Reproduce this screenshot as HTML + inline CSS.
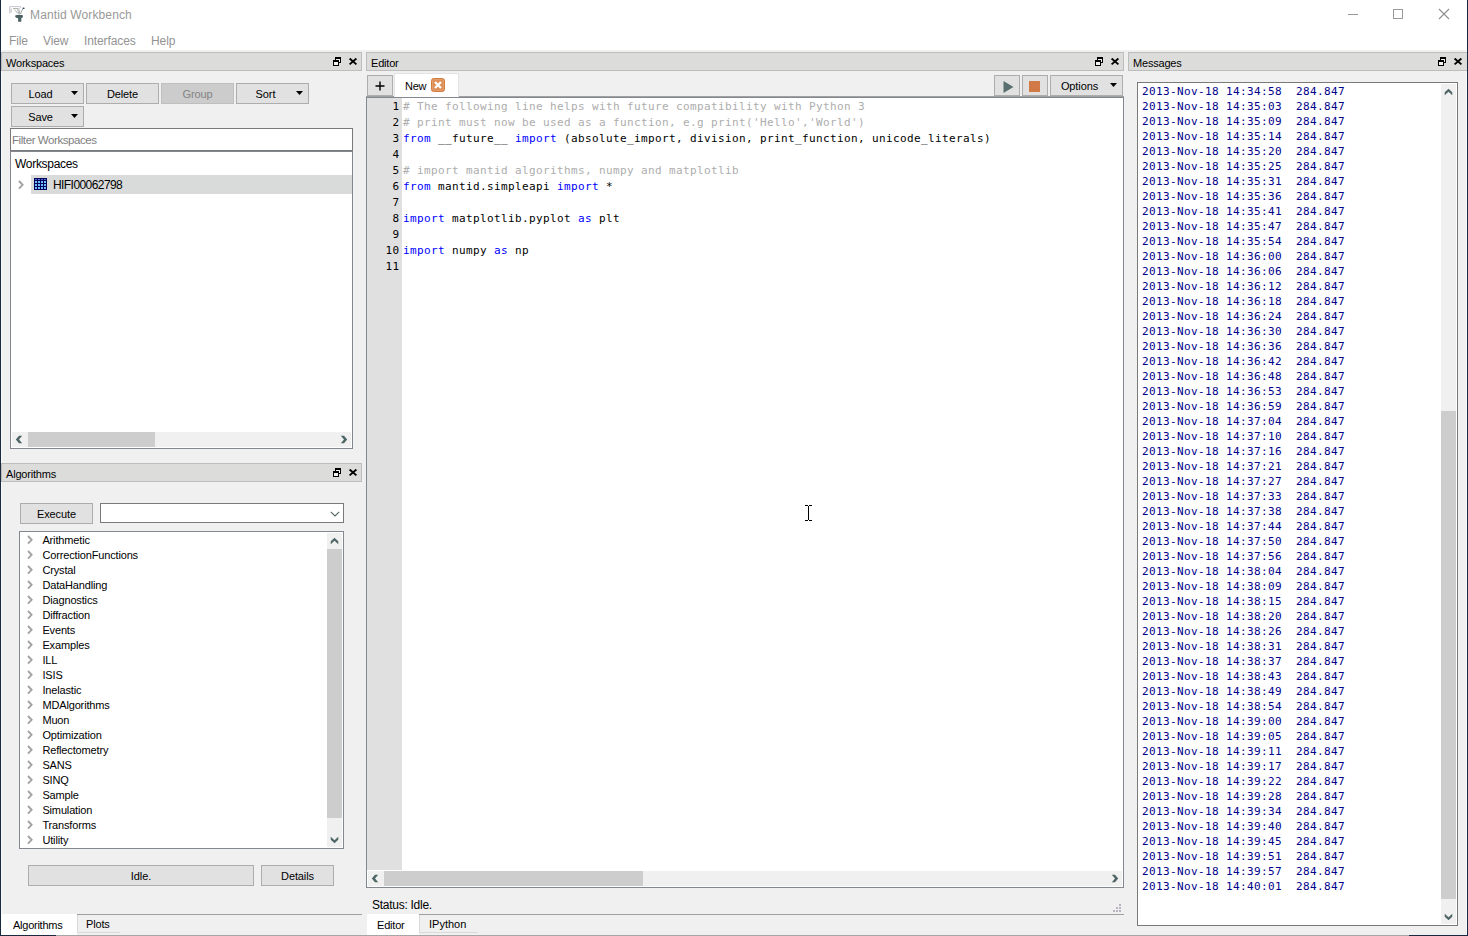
<!DOCTYPE html>
<html lang="en"><head><meta charset="utf-8"><title>Mantid Workbench</title>
<style>
html,body{margin:0;padding:0}
body{width:1468px;height:936px;overflow:hidden;background:#f0f0f0;position:relative;
 font-family:"Liberation Sans",sans-serif;font-size:11px;color:#000}
div,span,svg{position:absolute;box-sizing:border-box}
.t{white-space:pre;line-height:1}
/* window chrome */
#wl{left:0;top:0;width:1px;height:936px;background:#1a2940}
#wr{left:1467px;top:0;width:1px;height:936px;background:#1a2940}
#wb1{left:0;top:935px;width:56px;height:1px;background:#1a2940}
#wb2{left:56px;top:935px;width:1353px;height:1px;background:#a6a6a6}
#wb3{left:1409px;top:935px;width:59px;height:1px;background:#1a2940}
#top{left:1px;top:0;width:1466px;height:50px;background:#fff}
#title{left:30px;top:9px;font-size:12px;color:#999;letter-spacing:0.13px}
.menu{top:35px;font-size:12px;color:#939393;letter-spacing:-0.1px}
/* dock title bars */
.dt{height:19px;background:#dcdcda;border:1px solid #bdbdbd}
.dt .t{left:4px;top:5px;letter-spacing:-0.2px}
/* buttons */
.btn{background:#e1e1e1;border:1px solid #adadad;text-align:center;letter-spacing:-0.1px}
.btn .t{position:static;display:block;line-height:19px;padding-top:1px}
.btn.dis{background:#cccccc;border-color:#bfbfbf;color:#838383}
.btn .dd{right:5px;top:7px;width:7px;height:4px}
/* frames */
.fr{background:#fff;border:1px solid #828790}
.sb{background:#f0f0f0}
.th{background:#cdcdcd}
/* algorithm tree */
.ar{position:relative;height:15px;left:0;width:306px}
.ar span{left:22.4px;top:2px;white-space:pre;line-height:1;letter-spacing:-0.15px}
.ar .tw{left:6.8px;top:2.3px;width:7px;height:10px}
/* editor */
#code{left:403px;top:99px;font-family:"DejaVu Sans Mono","Liberation Mono",monospace;font-size:11px;letter-spacing:0.378px}
#code div{position:relative;height:16px;line-height:16px;white-space:pre}
.c{color:#adadad}.k{color:#0000ff}
#nums{left:368px;top:99px;width:31.4px;font-family:"DejaVu Sans Mono","Liberation Mono",monospace;font-size:11px;letter-spacing:0.378px;text-align:right}
#nums div{position:relative;height:16px;line-height:16px}
/* messages */
#msgs{left:1142px;top:84px;font-family:"DejaVu Sans Mono","Liberation Mono",monospace;font-size:11px;letter-spacing:0.378px;color:#00008b}
.ml{position:relative;height:15px;line-height:15px;white-space:pre}
/* tabs */
.tab{background:#fff}

</style></head>
<body>
<!-- ===== window chrome ===== -->
<div id="top"></div>
<div style="left:1px;top:50px;width:1px;height:885px;background:#fafafa"></div><div style="left:1466px;top:50px;width:1px;height:885px;background:#fafafa"></div>
<svg id="logo" style="left:0;top:0;width:30px;height:26px" viewBox="0 0 30 26">
 <path d="M9.6 13.5 V6.6 H20.6 V8.2" stroke="#cbc7d0" stroke-width="1" fill="none"/>
 <path d="M13 8.5 H17" stroke="#b4b4aa" stroke-width="1" fill="none"/>
 <path d="M11.2 8.5 L11 12.8 M14.5 9.5 L18 13.5 M17.3 8 L19 14.5 M18.8 8 L19.8 14.5" stroke="#a9adad" stroke-width="0.9" fill="none"/>
 <path d="M23 8.8 Q21.3 10.5 20.6 14" stroke="#8c9a8c" stroke-width="0.9" fill="none"/>
 <ellipse cx="23.6" cy="8.3" rx="1.1" ry="0.8" fill="#2c3c52"/>
 <path d="M15 16.3 Q15.3 15 17 15 H21.8 Q23 15 23 16.2 Q22.6 18.2 21.3 18.2 V21.7 H18.1 V18.2 Q15.6 18.2 15 16.3Z" fill="#4c6262"/>
</svg>
<span class="t" id="title">Mantid Workbench</span>
<span class="t menu" style="left:9px">File</span>
<span class="t menu" style="left:43px">View</span>
<span class="t menu" style="left:84px">Interfaces</span>
<span class="t menu" style="left:151px">Help</span>
<svg style="left:1342px;top:4px;width:112px;height:22px" viewBox="0 0 112 22">
 <path d="M6 10.5 H16" stroke="#999" stroke-width="1" fill="none"/>
 <rect x="51.5" y="5.5" width="9" height="9" stroke="#999" stroke-width="1" fill="none"/>
 <path d="M97 5 L107 15 M107 5 L97 15" stroke="#8f8f8f" stroke-width="1.1" fill="none"/>
</svg>

<!-- ===== dock title bars ===== -->
<div class="dt" style="left:1px;top:52px;width:361px"><span class="t">Workspaces</span>
 <svg class="fl" style="left:331px;top:4px;width:8px;height:9px" viewBox="0 0 8 9" shape-rendering="crispEdges"><path d="M3 2H7V5H6V8H1V5H3Z" fill="#f2f2f2"/><path d="M2 0H8V6H6V5H7V2H3V3H2Z M0 3H6V9H0Z M1 5V8H5V5Z" fill="#000" fill-rule="evenodd"/></svg>
 <svg class="cl" style="left:346px;top:5px;width:10px;height:8px" viewBox="0 0 10 8"><path d="M1.6 0.5 L8.4 6.4 M8.4 0.5 L1.6 6.4" stroke="#000" stroke-width="1.9" fill="none"/></svg>
</div>
<div class="dt" style="left:366px;top:52px;width:758px"><span class="t">Editor</span>
 <svg class="fl" style="left:728px;top:4px;width:8px;height:9px" viewBox="0 0 8 9" shape-rendering="crispEdges"><path d="M3 2H7V5H6V8H1V5H3Z" fill="#f2f2f2"/><path d="M2 0H8V6H6V5H7V2H3V3H2Z M0 3H6V9H0Z M1 5V8H5V5Z" fill="#000" fill-rule="evenodd"/></svg>
 <svg class="cl" style="left:743px;top:5px;width:10px;height:8px" viewBox="0 0 10 8"><path d="M1.6 0.5 L8.4 6.4 M8.4 0.5 L1.6 6.4" stroke="#000" stroke-width="1.9" fill="none"/></svg>
</div>
<div class="dt" style="left:1128px;top:52px;width:340px"><span class="t">Messages</span>
 <svg class="fl" style="left:309px;top:4px;width:8px;height:9px" viewBox="0 0 8 9" shape-rendering="crispEdges"><path d="M3 2H7V5H6V8H1V5H3Z" fill="#f2f2f2"/><path d="M2 0H8V6H6V5H7V2H3V3H2Z M0 3H6V9H0Z M1 5V8H5V5Z" fill="#000" fill-rule="evenodd"/></svg>
 <svg class="cl" style="left:324px;top:5px;width:10px;height:8px" viewBox="0 0 10 8"><path d="M1.6 0.5 L8.4 6.4 M8.4 0.5 L1.6 6.4" stroke="#000" stroke-width="1.9" fill="none"/></svg>
</div>
<div class="dt" style="left:1px;top:463px;width:361px"><span class="t">Algorithms</span>
 <svg class="fl" style="left:331px;top:4px;width:8px;height:9px" viewBox="0 0 8 9" shape-rendering="crispEdges"><path d="M3 2H7V5H6V8H1V5H3Z" fill="#f2f2f2"/><path d="M2 0H8V6H6V5H7V2H3V3H2Z M0 3H6V9H0Z M1 5V8H5V5Z" fill="#000" fill-rule="evenodd"/></svg>
 <svg class="cl" style="left:346px;top:5px;width:10px;height:8px" viewBox="0 0 10 8"><path d="M1.6 0.5 L8.4 6.4 M8.4 0.5 L1.6 6.4" stroke="#000" stroke-width="1.9" fill="none"/></svg>
</div>

<!-- ===== Workspaces panel ===== -->
<div class="btn" style="left:11px;top:83px;width:73px;height:21px"><span class="t" style="padding-right:14px">Load</span><svg class="dd" viewBox="0 0 7 4"><path d="M0 0 H7 L3.5 4 Z" fill="#000"/></svg></div>
<div class="btn" style="left:86px;top:83px;width:73px;height:21px"><span class="t">Delete</span></div>
<div class="btn dis" style="left:161px;top:83px;width:73px;height:21px"><span class="t">Group</span></div>
<div class="btn" style="left:236px;top:83px;width:73px;height:21px"><span class="t" style="padding-right:14px">Sort</span><svg class="dd" viewBox="0 0 7 4"><path d="M0 0 H7 L3.5 4 Z" fill="#000"/></svg></div>
<div class="btn" style="left:11px;top:106px;width:73px;height:21px"><span class="t" style="padding-right:14px">Save</span><svg class="dd" viewBox="0 0 7 4"><path d="M0 0 H7 L3.5 4 Z" fill="#000"/></svg></div>
<div class="fr" style="left:10px;top:128px;width:343px;height:23px;border-color:#7a7a7a"><span class="t" style="left:1px;top:6px;font-size:11.5px;letter-spacing:-0.42px;color:#808080">Filter Workspaces</span></div>
<div class="fr" style="left:10px;top:151px;width:343px;height:298px">
 <span class="t" style="left:4px;top:6px;font-size:12px;letter-spacing:-0.3px">Workspaces</span>
 <div style="left:20px;top:23px;width:321px;height:19px;background:#d9dbda"></div>
 <svg style="left:6.5px;top:27.8px;width:7px;height:10px" viewBox="0 0 7 10"><path d="M1 1 L4.6 4.8 L1 8.6" fill="none" stroke="#a3a3a3" stroke-width="1.9"/></svg>
 <svg id="wsicon" style="left:23px;top:26px;width:13px;height:12px" viewBox="0 0 13 12" shape-rendering="crispEdges">
  <rect width="13" height="12" fill="#00005c"/>
  <g fill="#4a6fd0"><rect x="1" y="1" width="2" height="1"/><rect x="4" y="1" width="2" height="1"/><rect x="7" y="1" width="2" height="1"/><rect x="10" y="1" width="2" height="1"/></g>
  <g fill="#6cc0ff"><rect x="1" y="3" width="2" height="2"/><rect x="4" y="3" width="2" height="2"/><rect x="7" y="3" width="2" height="2"/><rect x="10" y="3" width="2" height="2"/><rect x="1" y="6" width="2" height="2"/><rect x="4" y="6" width="2" height="2"/><rect x="7" y="6" width="2" height="2"/><rect x="10" y="6" width="2" height="2"/><rect x="1" y="9" width="2" height="2"/><rect x="4" y="9" width="2" height="2"/><rect x="7" y="9" width="2" height="2"/><rect x="10" y="9" width="2" height="2"/></g>
 </svg>
 <span class="t" style="left:42px;top:27px;font-size:12px;letter-spacing:-0.57px">HIFI00062798</span>
 </div>
<div class="sb" style="left:12px;top:432px;width:339px;height:15px"></div>
<div class="th" style="left:28px;top:432px;width:127px;height:15px"></div>
<svg style="left:15px;top:435px;width:8px;height:9px" viewBox="0 0 8 9"><polygon points="0.8,4.5 4,0.85 7.2,0.85 4,4.5 7.2,8.15 4,8.15" fill="#4e6565"/></svg>
<svg style="left:340px;top:435px;width:8px;height:9px" viewBox="0 0 8 9"><polygon points="7.2,4.5 4,0.85 0.8,0.85 4,4.5 0.8,8.15 4,8.15" fill="#4e6565"/></svg>

<!-- ===== Algorithms panel ===== -->
<div class="btn" style="left:20px;top:503px;width:73px;height:21px"><span class="t">Execute</span></div>
<div class="fr" style="left:100px;top:503px;width:244px;height:20px;border-color:#7a7a7a">
 <svg style="left:229px;top:7px;width:10px;height:6px" viewBox="0 0 10 6"><path d="M0.8 0.8 L5 5 L9.2 0.8" fill="none" stroke="#566464" stroke-width="1.1"/></svg>
</div>
<div class="fr" style="left:19px;top:531px;width:325px;height:318px">
 <div style="left:0;top:1px;width:306px;height:315px">
<div class="ar"><svg class="tw" viewBox="0 0 7 10"><path d="M1 1 L4.6 4.8 L1 8.6" fill="none" stroke="#a3a3a3" stroke-width="1.9"/></svg><span>Arithmetic</span></div>
<div class="ar"><svg class="tw" viewBox="0 0 7 10"><path d="M1 1 L4.6 4.8 L1 8.6" fill="none" stroke="#a3a3a3" stroke-width="1.9"/></svg><span>CorrectionFunctions</span></div>
<div class="ar"><svg class="tw" viewBox="0 0 7 10"><path d="M1 1 L4.6 4.8 L1 8.6" fill="none" stroke="#a3a3a3" stroke-width="1.9"/></svg><span>Crystal</span></div>
<div class="ar"><svg class="tw" viewBox="0 0 7 10"><path d="M1 1 L4.6 4.8 L1 8.6" fill="none" stroke="#a3a3a3" stroke-width="1.9"/></svg><span>DataHandling</span></div>
<div class="ar"><svg class="tw" viewBox="0 0 7 10"><path d="M1 1 L4.6 4.8 L1 8.6" fill="none" stroke="#a3a3a3" stroke-width="1.9"/></svg><span>Diagnostics</span></div>
<div class="ar"><svg class="tw" viewBox="0 0 7 10"><path d="M1 1 L4.6 4.8 L1 8.6" fill="none" stroke="#a3a3a3" stroke-width="1.9"/></svg><span>Diffraction</span></div>
<div class="ar"><svg class="tw" viewBox="0 0 7 10"><path d="M1 1 L4.6 4.8 L1 8.6" fill="none" stroke="#a3a3a3" stroke-width="1.9"/></svg><span>Events</span></div>
<div class="ar"><svg class="tw" viewBox="0 0 7 10"><path d="M1 1 L4.6 4.8 L1 8.6" fill="none" stroke="#a3a3a3" stroke-width="1.9"/></svg><span>Examples</span></div>
<div class="ar"><svg class="tw" viewBox="0 0 7 10"><path d="M1 1 L4.6 4.8 L1 8.6" fill="none" stroke="#a3a3a3" stroke-width="1.9"/></svg><span>ILL</span></div>
<div class="ar"><svg class="tw" viewBox="0 0 7 10"><path d="M1 1 L4.6 4.8 L1 8.6" fill="none" stroke="#a3a3a3" stroke-width="1.9"/></svg><span>ISIS</span></div>
<div class="ar"><svg class="tw" viewBox="0 0 7 10"><path d="M1 1 L4.6 4.8 L1 8.6" fill="none" stroke="#a3a3a3" stroke-width="1.9"/></svg><span>Inelastic</span></div>
<div class="ar"><svg class="tw" viewBox="0 0 7 10"><path d="M1 1 L4.6 4.8 L1 8.6" fill="none" stroke="#a3a3a3" stroke-width="1.9"/></svg><span>MDAlgorithms</span></div>
<div class="ar"><svg class="tw" viewBox="0 0 7 10"><path d="M1 1 L4.6 4.8 L1 8.6" fill="none" stroke="#a3a3a3" stroke-width="1.9"/></svg><span>Muon</span></div>
<div class="ar"><svg class="tw" viewBox="0 0 7 10"><path d="M1 1 L4.6 4.8 L1 8.6" fill="none" stroke="#a3a3a3" stroke-width="1.9"/></svg><span>Optimization</span></div>
<div class="ar"><svg class="tw" viewBox="0 0 7 10"><path d="M1 1 L4.6 4.8 L1 8.6" fill="none" stroke="#a3a3a3" stroke-width="1.9"/></svg><span>Reflectometry</span></div>
<div class="ar"><svg class="tw" viewBox="0 0 7 10"><path d="M1 1 L4.6 4.8 L1 8.6" fill="none" stroke="#a3a3a3" stroke-width="1.9"/></svg><span>SANS</span></div>
<div class="ar"><svg class="tw" viewBox="0 0 7 10"><path d="M1 1 L4.6 4.8 L1 8.6" fill="none" stroke="#a3a3a3" stroke-width="1.9"/></svg><span>SINQ</span></div>
<div class="ar"><svg class="tw" viewBox="0 0 7 10"><path d="M1 1 L4.6 4.8 L1 8.6" fill="none" stroke="#a3a3a3" stroke-width="1.9"/></svg><span>Sample</span></div>
<div class="ar"><svg class="tw" viewBox="0 0 7 10"><path d="M1 1 L4.6 4.8 L1 8.6" fill="none" stroke="#a3a3a3" stroke-width="1.9"/></svg><span>Simulation</span></div>
<div class="ar"><svg class="tw" viewBox="0 0 7 10"><path d="M1 1 L4.6 4.8 L1 8.6" fill="none" stroke="#a3a3a3" stroke-width="1.9"/></svg><span>Transforms</span></div>
<div class="ar"><svg class="tw" viewBox="0 0 7 10"><path d="M1 1 L4.6 4.8 L1 8.6" fill="none" stroke="#a3a3a3" stroke-width="1.9"/></svg><span>Utility</span></div>
 </div>
</div>
<div class="sb" style="left:327px;top:533px;width:15px;height:314px"></div>
<div class="th" style="left:327px;top:549px;width:15px;height:269px"></div>
<svg style="left:330px;top:537px;width:9px;height:8px" viewBox="0 0 9 8"><polygon points="4.5,0.8 8.25,4.2 8.25,7.2 4.5,3.8 0.75,7.2 0.75,4.2" fill="#4e6565"/></svg>
<svg style="left:330px;top:836px;width:9px;height:8px" viewBox="0 0 9 8"><polygon points="4.5,7.2 8.25,3.8 8.25,0.8 4.5,4.2 0.75,0.8 0.75,3.8" fill="#4e6565"/></svg>
<div class="btn" style="left:28px;top:865px;width:226px;height:21px"><span class="t">Idle.</span></div>
<div class="btn" style="left:261px;top:865px;width:73px;height:21px"><span class="t">Details</span></div>
<div style="left:76px;top:914px;width:286px;height:1px;background:#a0a0a0"></div>
<div class="tab" style="left:1px;top:914px;width:76px;height:21px"><span class="t" style="left:12px;top:6px;letter-spacing:-0.25px">Algorithms</span></div>
<div style="left:77px;top:915px;width:43px;height:18px;border-left:1px solid #d9d9d9;border-bottom:1px solid #d9d9d9"><span class="t" style="left:8px;top:4px;letter-spacing:-0.15px">Plots</span></div>

<!-- ===== Editor panel ===== -->
<div class="btn" style="left:367px;top:75px;width:26px;height:21px"><svg style="left:7px;top:5px;width:10px;height:10px" viewBox="0 0 10 10"><path d="M5 0.5 V9.5 M0.5 5 H9.5" stroke="#000" stroke-width="1.4"/></svg></div>
<div class="tab" style="left:394px;top:73px;width:65px;height:24px;border:1px solid #e3e3e3;border-bottom:none;z-index:2"><span class="t" style="left:10px;top:7px;letter-spacing:-0.3px">New</span>
 <svg style="left:36px;top:4px;width:14px;height:14px" viewBox="0 0 14 14"><rect x="0.5" y="0.5" width="13" height="13" rx="2.2" fill="#dd8f58" stroke="#d27c3e"/><rect x="1.6" y="1.6" width="10.8" height="10.8" rx="1.3" fill="none" stroke="#e4a372" stroke-width="0.8"/><path d="M4 4 L10 10 M10 4 L4 10" stroke="#fff" stroke-width="2.2"/></svg>
</div>
<div class="btn" style="left:994px;top:75px;width:26px;height:21px"><svg style="left:8px;top:5px;width:11px;height:12px" viewBox="0 0 11 12"><path d="M0.5 0 L10.5 6 L0.5 12 Z" fill="#5a7070"/></svg></div>
<div class="btn" style="left:1022px;top:75px;width:26px;height:21px"><div style="left:6px;top:5px;width:11px;height:11px;background:#d17a48"></div></div>
<div class="btn" style="left:1050px;top:75px;width:73px;height:21px"><span class="t" style="padding-right:14px">Options</span><svg class="dd" viewBox="0 0 7 4"><path d="M0 0 H7 L3.5 4 Z" fill="#000"/></svg></div>
<div style="left:366px;top:96px;width:758px;height:1px;background:#a0a0a0"></div>
<div class="fr" style="left:366px;top:97px;width:758px;height:791px"></div>
<div style="left:367px;top:98px;width:35px;height:772px;background:#e0e0e0"></div>
<div id="nums"><div>1</div><div>2</div><div>3</div><div>4</div><div>5</div><div>6</div><div>7</div><div>8</div><div>9</div><div>10</div><div>11</div></div>
<div id="code">
<div class="c"># The following line helps with future compatibility with Python 3</div>
<div class="c"># print must now be used as a function, e.g print('Hello','World')</div>
<div><span class="k" style="position:static">from</span> __future__ <span class="k" style="position:static">import</span> (absolute_import, division, print_function, unicode_literals)</div>
<div> </div>
<div class="c"># import mantid algorithms, numpy and matplotlib</div>
<div><span class="k" style="position:static">from</span> mantid.simpleapi <span class="k" style="position:static">import</span> *</div>
<div> </div>
<div><span class="k" style="position:static">import</span> matplotlib.pyplot <span class="k" style="position:static">as</span> plt</div>
<div> </div>
<div><span class="k" style="position:static">import</span> numpy <span class="k" style="position:static">as</span> np</div>
<div> </div>
</div>
<div class="sb" style="left:368px;top:871px;width:754px;height:15px"></div>
<div class="th" style="left:384px;top:871px;width:259px;height:15px"></div>
<svg style="left:371px;top:874px;width:8px;height:9px" viewBox="0 0 8 9"><polygon points="0.8,4.5 4,0.85 7.2,0.85 4,4.5 7.2,8.15 4,8.15" fill="#4e6565"/></svg>
<svg style="left:1111px;top:874px;width:8px;height:9px" viewBox="0 0 8 9"><polygon points="7.2,4.5 4,0.85 0.8,0.85 4,4.5 0.8,8.15 4,8.15" fill="#4e6565"/></svg>
<svg id="ibeam" style="left:805px;top:505px;width:7px;height:16px" viewBox="0 0 7 16" shape-rendering="crispEdges" fill="#000"><rect x="0" y="0" width="3" height="1"/><rect x="4" y="0" width="3" height="1"/><rect x="3" y="1" width="1" height="14"/><rect x="0" y="15" width="3" height="1"/><rect x="4" y="15" width="3" height="1"/></svg>
<span class="t" style="left:372px;top:899px;font-size:12px;letter-spacing:-0.27px">Status: Idle.</span>
<svg style="left:1112px;top:903px;width:10px;height:10px" viewBox="0 0 10 10" fill="#b9b2c0" shape-rendering="crispEdges"><rect x="7" y="1" width="2" height="2"/><rect x="4" y="4" width="2" height="2"/><rect x="7" y="4" width="2" height="2"/><rect x="1" y="7" width="2" height="2"/><rect x="4" y="7" width="2" height="2"/><rect x="7" y="7" width="2" height="2"/></svg>
<div style="left:419px;top:914px;width:705px;height:1px;background:#a0a0a0"></div>
<div class="tab" style="left:367px;top:914px;width:52px;height:21px"><span class="t" style="left:10px;top:6px;letter-spacing:-0.2px">Editor</span></div>
<div style="left:419px;top:915px;width:59px;height:18px;border-left:1px solid #d9d9d9;border-bottom:1px solid #d9d9d9"><span class="t" style="left:9px;top:4px">IPython</span></div>

<!-- ===== Messages panel ===== -->
<div class="fr" style="left:1137px;top:82px;width:321px;height:844px;border-color:#7a7a7a"></div>
<div class="sb" style="left:1441px;top:84px;width:15px;height:840px"></div>
<div class="th" style="left:1441px;top:411px;width:15px;height:488px"></div>
<svg style="left:1444px;top:88px;width:9px;height:8px" viewBox="0 0 9 8"><polygon points="4.5,0.8 8.25,4.2 8.25,7.2 4.5,3.8 0.75,7.2 0.75,4.2" fill="#4e6565"/></svg>
<svg style="left:1444px;top:913px;width:9px;height:8px" viewBox="0 0 9 8"><polygon points="4.5,7.2 8.25,3.8 8.25,0.8 4.5,4.2 0.75,0.8 0.75,3.8" fill="#4e6565"/></svg>
<div id="msgs">
<div class="ml">2013-Nov-18 14:34:58  284.847</div>
<div class="ml">2013-Nov-18 14:35:03  284.847</div>
<div class="ml">2013-Nov-18 14:35:09  284.847</div>
<div class="ml">2013-Nov-18 14:35:14  284.847</div>
<div class="ml">2013-Nov-18 14:35:20  284.847</div>
<div class="ml">2013-Nov-18 14:35:25  284.847</div>
<div class="ml">2013-Nov-18 14:35:31  284.847</div>
<div class="ml">2013-Nov-18 14:35:36  284.847</div>
<div class="ml">2013-Nov-18 14:35:41  284.847</div>
<div class="ml">2013-Nov-18 14:35:47  284.847</div>
<div class="ml">2013-Nov-18 14:35:54  284.847</div>
<div class="ml">2013-Nov-18 14:36:00  284.847</div>
<div class="ml">2013-Nov-18 14:36:06  284.847</div>
<div class="ml">2013-Nov-18 14:36:12  284.847</div>
<div class="ml">2013-Nov-18 14:36:18  284.847</div>
<div class="ml">2013-Nov-18 14:36:24  284.847</div>
<div class="ml">2013-Nov-18 14:36:30  284.847</div>
<div class="ml">2013-Nov-18 14:36:36  284.847</div>
<div class="ml">2013-Nov-18 14:36:42  284.847</div>
<div class="ml">2013-Nov-18 14:36:48  284.847</div>
<div class="ml">2013-Nov-18 14:36:53  284.847</div>
<div class="ml">2013-Nov-18 14:36:59  284.847</div>
<div class="ml">2013-Nov-18 14:37:04  284.847</div>
<div class="ml">2013-Nov-18 14:37:10  284.847</div>
<div class="ml">2013-Nov-18 14:37:16  284.847</div>
<div class="ml">2013-Nov-18 14:37:21  284.847</div>
<div class="ml">2013-Nov-18 14:37:27  284.847</div>
<div class="ml">2013-Nov-18 14:37:33  284.847</div>
<div class="ml">2013-Nov-18 14:37:38  284.847</div>
<div class="ml">2013-Nov-18 14:37:44  284.847</div>
<div class="ml">2013-Nov-18 14:37:50  284.847</div>
<div class="ml">2013-Nov-18 14:37:56  284.847</div>
<div class="ml">2013-Nov-18 14:38:04  284.847</div>
<div class="ml">2013-Nov-18 14:38:09  284.847</div>
<div class="ml">2013-Nov-18 14:38:15  284.847</div>
<div class="ml">2013-Nov-18 14:38:20  284.847</div>
<div class="ml">2013-Nov-18 14:38:26  284.847</div>
<div class="ml">2013-Nov-18 14:38:31  284.847</div>
<div class="ml">2013-Nov-18 14:38:37  284.847</div>
<div class="ml">2013-Nov-18 14:38:43  284.847</div>
<div class="ml">2013-Nov-18 14:38:49  284.847</div>
<div class="ml">2013-Nov-18 14:38:54  284.847</div>
<div class="ml">2013-Nov-18 14:39:00  284.847</div>
<div class="ml">2013-Nov-18 14:39:05  284.847</div>
<div class="ml">2013-Nov-18 14:39:11  284.847</div>
<div class="ml">2013-Nov-18 14:39:17  284.847</div>
<div class="ml">2013-Nov-18 14:39:22  284.847</div>
<div class="ml">2013-Nov-18 14:39:28  284.847</div>
<div class="ml">2013-Nov-18 14:39:34  284.847</div>
<div class="ml">2013-Nov-18 14:39:40  284.847</div>
<div class="ml">2013-Nov-18 14:39:45  284.847</div>
<div class="ml">2013-Nov-18 14:39:51  284.847</div>
<div class="ml">2013-Nov-18 14:39:57  284.847</div>
<div class="ml">2013-Nov-18 14:40:01  284.847</div>
</div>

<div id="wl"></div><div id="wr"></div><div id="wb1"></div><div id="wb2"></div><div id="wb3"></div>

</body></html>
